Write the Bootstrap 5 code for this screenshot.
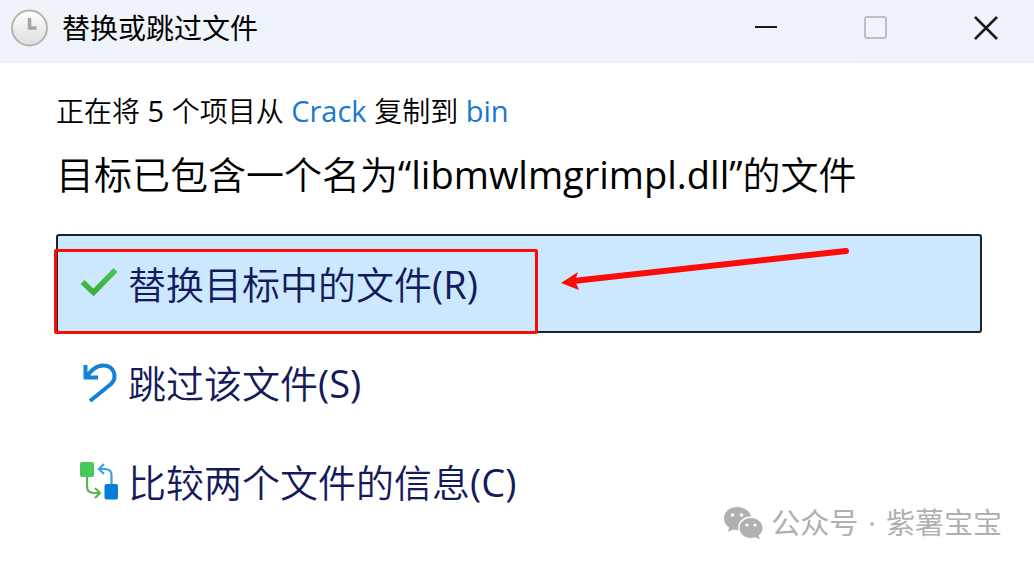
<!DOCTYPE html>
<html lang="zh-CN">
<head>
<meta charset="utf-8">
<meta name="viewport" content="width=device-width, initial-scale=1">
<title>替换或跳过文件</title>
<link rel="stylesheet" href="https://cdn.jsdelivr.net/npm/bootstrap@5.3.0/dist/css/bootstrap.min.css">
<style>
  body { font-family: "Open Sans", "Noto Sans CJK SC", sans-serif; color: #000; background: #fff; }
  svg { display: block; flex: none; }
  .titlebar { height: 63px; padding: 0 0 8px 10px; background: linear-gradient(100deg, #eef4f9, #eff4fa 70%, #eff2f8); }
  .titlebar h1 { font-size: 28px; line-height: 40px; font-weight: 400; }
  .win-controls { gap: 14px; }
  .win-btn { width: 96px; height: 55px; display: flex; align-items: center; justify-content: center; }
  .dialog-body { padding: 27px 52px 0 56px; }
  .summary { font-size: 29px; line-height: 40px; margin-bottom: 14px; }
  .summary a { color: #1878d2; }
  .summary .cjk { font-size: 28px; }
  .headline { font-size: 38px; line-height: 56px; margin-bottom: 32px; font-weight: 400; }
  .cjk { font-family: "Noto Sans CJK SC", sans-serif; font-weight: 350; }
  .option { height: 99px; padding: 0 0 0 22px; border: 2px solid transparent; border-radius: 3px; color: #141b5c; font-size: 38px; line-height: 56px; }
  .option:hover { color: #141b5c; background: #e5f3ff; }
  .option.selected, .option.selected:hover { background: #cce8ff; border-color: #1c2226; }
  .mark-box { left: -2px; top: 15px; width: 484px; height: 85px; border: 3px solid #fb0c06; border-radius: 2px; pointer-events: none; }
  .mark-arrow { left: 501px; top: 11px; pointer-events: none; }
  .watermark { right: 32px; bottom: 22px; color: #b0b0b0; font-size: 29px; line-height: 40px; }
  .watermark .account { gap: 10px; }
</style>
</head>
<body>
<div class="position-relative min-vh-100">
  <header class="titlebar d-flex align-items-center">
    <svg width="40" height="40" viewBox="0 0 40 40" aria-hidden="true">
      <defs><linearGradient id="face" x1="0" y1="0" x2="0" y2="1"><stop offset="0" stop-color="#fff"/><stop offset="1" stop-color="#dcdcdc"/></linearGradient></defs>
      <circle cx="19.500" cy="20" r="17.500" fill="url(#face)" stroke="#b4b4b4" stroke-width="2"/>
      <path d="M19.500 10v10h7" fill="none" stroke="#a5a5a5" stroke-width="3.500"/>
    </svg>
    <h1 class="mb-0 ms-2 ps-1 me-auto">替换或跳过文件</h1>
    <div class="d-flex win-controls">
      <button class="btn p-0 border-0 rounded-0 win-btn" type="button" aria-label="最小化">
        <svg width="24" height="24" viewBox="0 0 24 24"><path d="M1 11h22" stroke="#1a1a1a" stroke-width="2"/></svg>
      </button>
      <button class="btn p-0 border-0 rounded-0 win-btn" type="button" aria-label="最大化" disabled>
        <svg width="24" height="24" viewBox="0 0 24 24"><rect x="1" y="1" width="21" height="21" rx="2" fill="none" stroke="#a0a4a8" stroke-width="2"/></svg>
      </button>
      <button class="btn p-0 border-0 rounded-0 win-btn" type="button" aria-label="关闭">
        <svg width="24" height="24" viewBox="0 0 24 24"><path d="M1 1l22 22M23 1L1 23" stroke="#1a1a1a" stroke-width="2.500"/></svg>
      </button>
    </div>
  </header>

  <main class="dialog-body">
    <p class="summary"><span class="cjk">正在将</span> 5 <span class="cjk">个项目从</span> <a class="text-decoration-none" href="#">Crack</a> <span class="cjk">复制到</span> <a class="text-decoration-none" href="#">bin</a></p>
    <h2 class="headline"><span class="cjk">目标已包含一个名为</span>“libmwlmgrimpl.dll”<span class="cjk">的文件</span></h2>

    <div class="position-relative d-grid">
      <button class="btn option selected d-flex align-items-center text-start" type="button">
        <svg width="40" height="40" viewBox="0 0 40 40" aria-hidden="true">
          <defs><linearGradient id="tick" x1="0" y1="0" x2="0" y2="1"><stop offset="0" stop-color="#4cc552"/><stop offset="1" stop-color="#3fae38"/></linearGradient></defs>
          <path d="M2.500 18l11 10.500L35.500 6" fill="none" stroke="url(#tick)" stroke-width="5.500"/>
        </svg>
        <span class="ms-2"><span class="cjk">替换目标中的文件</span>(R)</span>
      </button>
      <div class="mark-box position-absolute"></div>
      <svg class="mark-arrow position-absolute" width="300" height="50" viewBox="0 0 300 50" aria-hidden="true">
        <path d="M16 36L289 6" stroke="#fb0c06" stroke-width="6" stroke-linecap="round"/>
        <path d="M4 38L21 27L18 36L22 45Z" fill="#fb0c06"/>
      </svg>
      <button class="btn option d-flex align-items-center text-start" type="button">
        <svg width="40" height="40" viewBox="0 0 40 40" aria-hidden="true">
          <path d="M5.500 2v12.500H18M6 14C12 7 16 2.500 23 2.500C34 2.500 38 14 31 21L10 38" fill="none" stroke="#1583d3" stroke-width="4"/>
        </svg>
        <span class="ms-2"><span class="cjk">跳过该文件</span>(S)</span>
      </button>
      <button class="btn option d-flex align-items-center text-start" type="button">
        <svg width="40" height="40" viewBox="0 0 40 40" aria-hidden="true">
          <rect x="0" y="0" width="14" height="15" rx="2" fill="#49c95a"/>
          <rect x="24.500" y="22" width="13.500" height="15.500" rx="2" fill="#087cd7"/>
          <path d="M7 15v9q0 7 7 7h6M15 26l5 5-5 5" fill="none" stroke="#55b949" stroke-width="2.200"/>
          <path d="M31.500 22v-9q0-6-7-6h-6M24 2l-5 5 5 5" fill="none" stroke="#38a2e8" stroke-width="2.200"/>
        </svg>
        <span class="ms-2"><span class="cjk">比较两个文件的信息</span>(C)</span>
      </button>
    </div>
  </main>

  <footer class="watermark position-absolute d-flex align-items-center gap-2">
    <svg width="40" height="34" viewBox="0 0 40 34" aria-hidden="true">
      <path d="M14 1C6.500 1 1 6 1 12.500c0 4 2 7 5 9L5 26l5-2.500c2 .5 3 .7 5.500.6C14 16 20 10 28 10.500 27 5 21 1 14 1Z" fill="#b0b0b0"/>
      <path d="M28 12c-6.500 0-11.500 4.500-11.500 10S21.500 32 28 32c1.500 0 3-.3 4.500-.8L37 33.500 35.500 29.500C38 27.500 39.500 25 39.500 22 39.500 16.500 34.500 12 28 12Z" fill="#b0b0b0"/>
      <g fill="#fff"><circle cx="9.500" cy="9" r="1.800"/><circle cx="18.500" cy="9" r="1.800"/><circle cx="24" cy="19" r="1.600"/><circle cx="32" cy="19" r="1.600"/></g>
    </svg>
    <div class="d-flex account"><span>公众号</span><span>·</span><span>紫薯宝宝</span></div>
  </footer>
</div>
<script src="https://cdn.jsdelivr.net/npm/bootstrap@5.3.0/dist/js/bootstrap.bundle.min.js"></script>
</body>
</html>
